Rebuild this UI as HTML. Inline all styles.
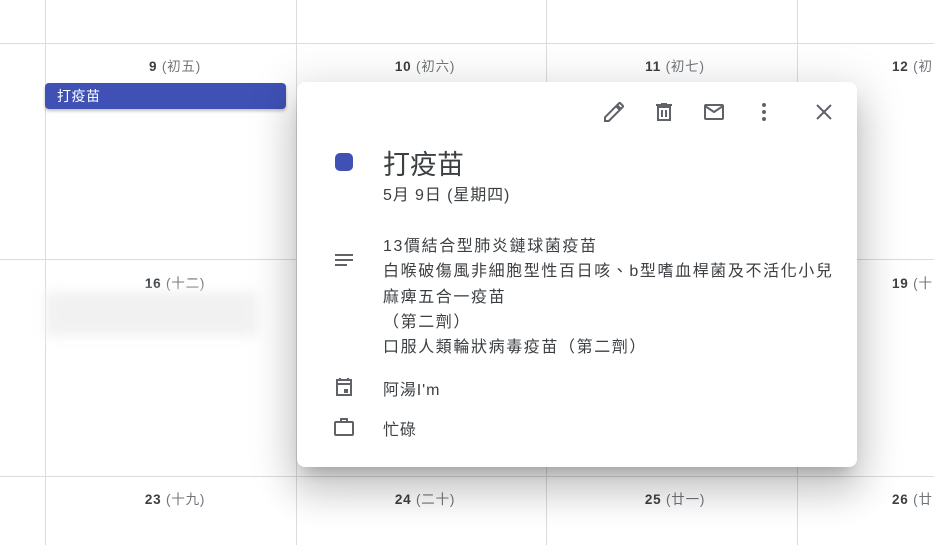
<!DOCTYPE html>
<html><head><meta charset="utf-8">
<style>
*{margin:0;padding:0;box-sizing:border-box}
body{width:934px;height:545px;overflow:hidden;background:#fff;font-family:"Liberation Sans","Noto Sans CJK TC",sans-serif;position:relative;color:#3c4043}
.v{position:absolute;top:0;width:1px;height:545px;background:#dadce0}
.h{position:absolute;left:0;width:934px;height:1px;background:#dadce0}
.d{position:absolute;font-size:13.5px;color:#3c4043;width:140px;text-align:center;font-weight:bold;letter-spacing:0.8px}
.d span{font-weight:normal;color:#70757a}
.chip{position:absolute;left:45px;top:83px;width:241px;height:26px;background:#3f51b5;border-radius:4px;color:#fff;font-size:14px;padding:3px 0 0 12px;box-shadow:0 2px 3px rgba(0,0,0,.25);letter-spacing:0.5px}
.blur{position:absolute;left:45px;top:292px;width:212px;height:44px;background:#f1f1f2;filter:blur(6px)}
.pop{position:absolute;left:297px;top:82px;width:560px;height:385px;background:#fff;border-radius:8px;box-shadow:0 24px 38px 3px rgba(0,0,0,.14),0 9px 46px 8px rgba(0,0,0,.12),0 11px 15px -7px rgba(0,0,0,.2)}
.ic{position:absolute}
.t{position:absolute;left:86px;font-size:16px;color:#3c4043;letter-spacing:0.9px;white-space:nowrap}
</style></head><body>
<div class="h" style="top:43px"></div>
<div class="h" style="top:259px"></div>
<div class="h" style="top:476px"></div>
<div class="v" style="left:45px"></div>
<div class="v" style="left:296px"></div>
<div class="v" style="left:546px"></div>
<div class="v" style="left:797px"></div>
<div class="d" style="left:105px;top:55px">9 <span>(初五)</span></div>
<div class="d" style="left:355px;top:55px">10 <span>(初六)</span></div>
<div class="d" style="left:605px;top:55px">11 <span>(初七)</span></div>
<div class="d" style="left:892px;top:55px;text-align:left">12 <span>(初</span></div>
<div class="d" style="left:105px;top:272px">16 <span>(十二)</span></div>
<div class="d" style="left:892px;top:272px;text-align:left">19 <span>(十</span></div>
<div class="d" style="left:105px;top:488px">23 <span>(十九)</span></div>
<div class="d" style="left:355px;top:488px">24 <span>(二十)</span></div>
<div class="d" style="left:605px;top:488px">25 <span>(廿一)</span></div>
<div class="d" style="left:892px;top:488px;text-align:left">26 <span>(廿</span></div>
<div class="chip">打疫苗</div>
<div class="blur"></div>
<div class="pop">
<svg class="ic" style="left:305px;top:18px" width="24" height="24" viewBox="0 0 24 24"><path d="M3 17.25V21h3.75L17.81 9.94l-3.75-3.75L3 17.25zM20.71 7.04a1 1 0 000-1.41l-2.34-2.34a1 1 0 00-1.41 0l-1.830 1.83 3.75 3.75 1.83-1.83z" fill="none" stroke="#5f6368" stroke-width="2"/></svg>
<svg class="ic" style="left:355px;top:18px" width="24" height="24" viewBox="0 0 24 24"><path d="M6 7h12v13H6zM4 5h16M9 4h6M10 10v7M14 10v7" fill="none" stroke="#5f6368" stroke-width="2"/></svg>
<svg class="ic" style="left:405px;top:18px" width="24" height="24" viewBox="0 0 24 24"><rect x="3" y="5" width="18" height="14" rx="1" fill="none" stroke="#5f6368" stroke-width="2"/><path d="M3 6l9 6 9-6" fill="none" stroke="#5f6368" stroke-width="2"/></svg>
<svg class="ic" style="left:455px;top:18px" width="24" height="24" viewBox="0 0 24 24"><circle cx="12" cy="5" r="2" fill="#5f6368"/><circle cx="12" cy="12" r="2" fill="#5f6368"/><circle cx="12" cy="19" r="2" fill="#5f6368"/></svg>
<svg class="ic" style="left:515px;top:18px" width="24" height="24" viewBox="0 0 24 24"><path d="M5 5l14 14M19 5L5 19" stroke="#5f6368" stroke-width="2"/></svg>
<div style="position:absolute;left:38px;top:71px;width:18px;height:18px;border-radius:5px;background:#3f51b5"></div>
<div class="t" style="top:61px;font-size:27px;letter-spacing:0">打疫苗</div>
<div class="t" style="top:99px">5月 9日 (星期四)</div>
<svg class="ic" style="left:35px;top:166px" width="24" height="24" viewBox="0 0 24 24"><path d="M3 7h18M3 12h18M3 17h12" stroke="#5f6368" stroke-width="2"/></svg>
<div class="t" style="top:152px;line-height:25.3px;letter-spacing:1.6px">13價結合型肺炎鏈球菌疫苗<br>白喉破傷風非細胞型性百日咳、b型嗜血桿菌及不活化小兒<br>麻痺五合一疫苗<br>（第二劑）<br>口服人類輪狀病毒疫苗（第二劑）</div>
<svg class="ic" style="left:35px;top:293px" width="24" height="24" viewBox="0 0 24 24"><path d="M5 5h14v15H5zM5 9h14M8 3v3M16 3v3" fill="none" stroke="#5f6368" stroke-width="2"/><rect x="12" y="14" width="4" height="4" fill="#5f6368"/></svg>
<div class="t" style="top:294px">阿湯I'm</div>
<svg class="ic" style="left:35px;top:333px" width="24" height="24" viewBox="0 0 24 24"><rect x="3" y="7" width="18" height="13" rx="1" fill="none" stroke="#5f6368" stroke-width="2"/><path d="M9 7V4h6v3" fill="none" stroke="#5f6368" stroke-width="2"/></svg>
<div class="t" style="top:334px">忙碌</div>
</div>
</body></html>
